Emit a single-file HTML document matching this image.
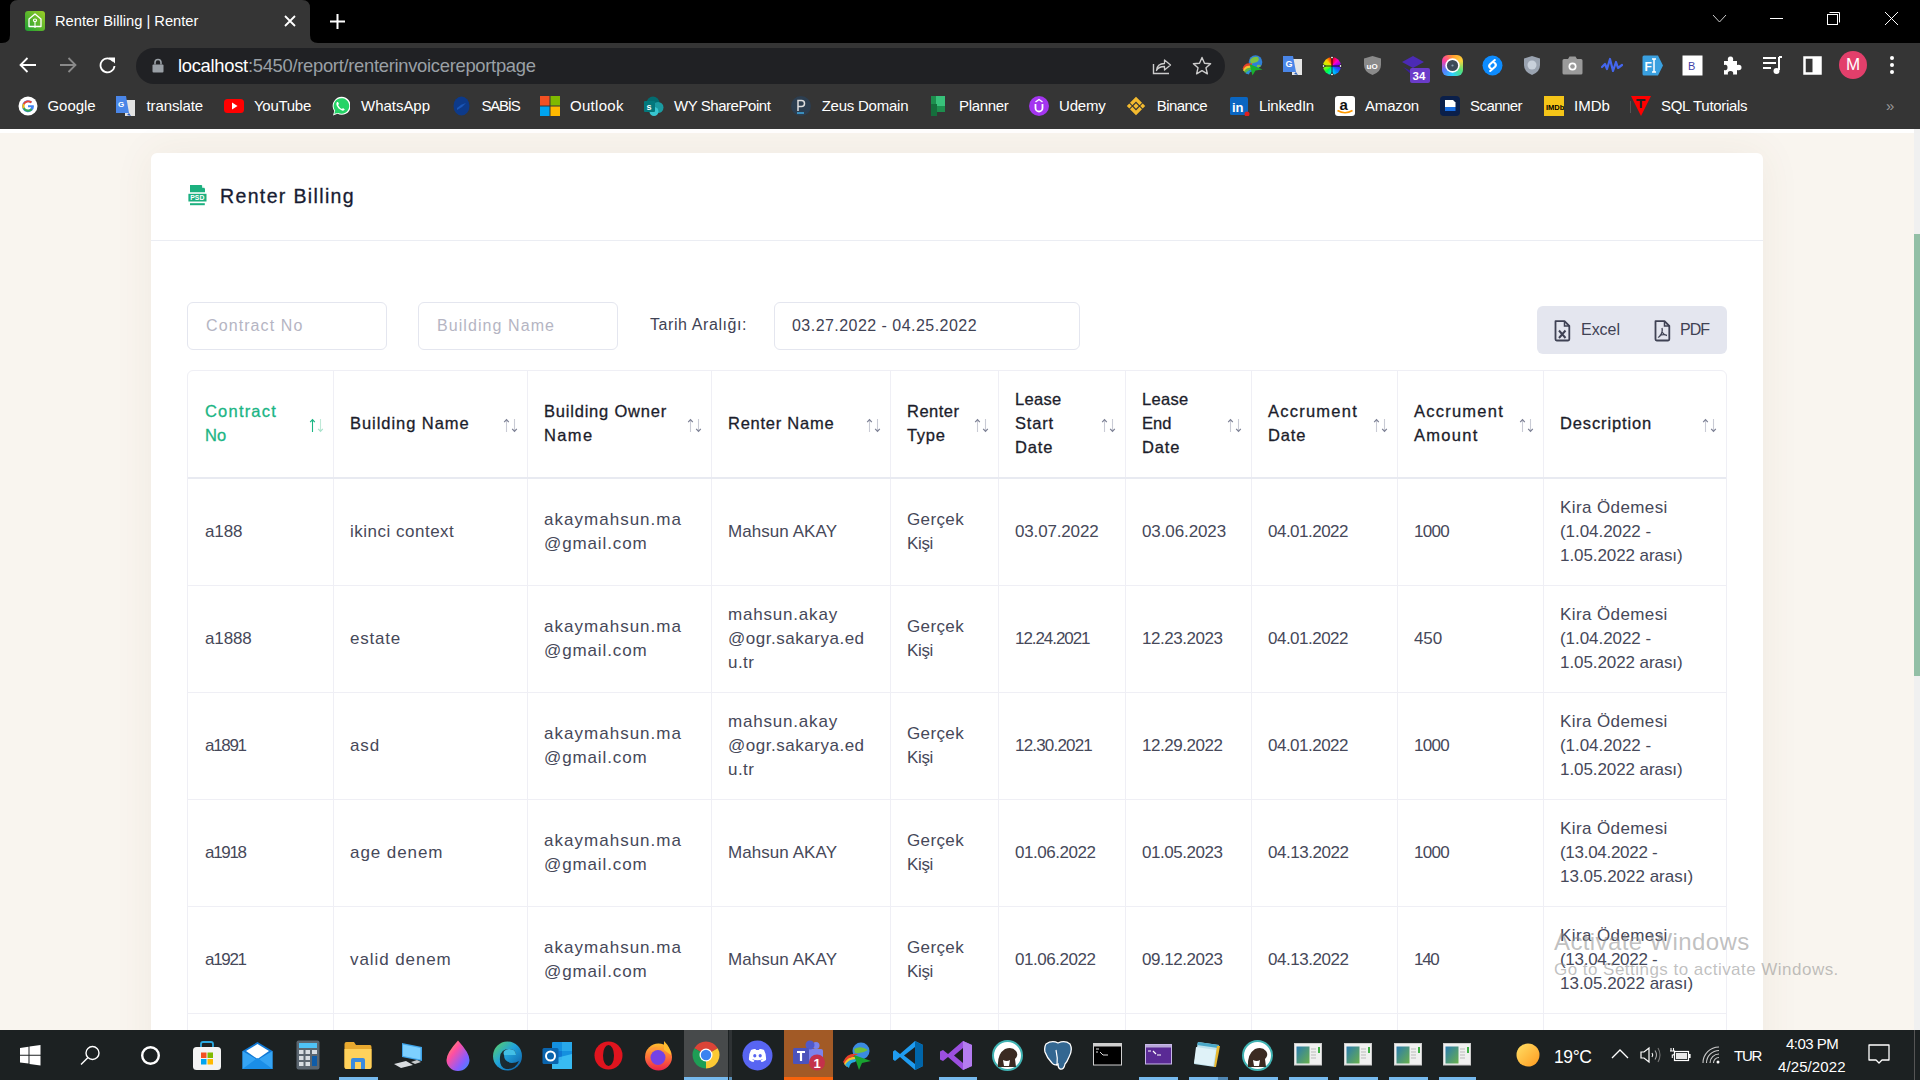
<!DOCTYPE html>
<html><head><meta charset="utf-8">
<style>
*{box-sizing:border-box;margin:0;padding:0}
html,body{width:1920px;height:1080px;overflow:hidden;background:#f9f5ef;font-family:"Liberation Sans",sans-serif}
.abs{position:absolute}
svg{display:block}
#tabs{position:absolute;left:0;top:0;width:1920px;height:43px;background:#000}
#toolbar{position:absolute;left:0;top:43px;width:1920px;height:43px;background:#353535}
#bm{position:absolute;left:0;top:86px;width:1920px;height:43px;background:#353535}
#omni{position:absolute;left:136px;top:48px;width:1089px;height:36px;border-radius:18px;background:#202124}
.ctext{color:#fff;font-size:14px;white-space:nowrap;line-height:1}
.bmt{position:absolute;top:98px;color:#fff;font-size:15px;line-height:15px;white-space:nowrap}
#page{position:absolute;left:0;top:129px;width:1914px;height:901px;background:#f9f5ef;overflow:hidden}
#topstrip{position:absolute;left:0;top:0;width:1914px;height:4px;background:#fff}
#sb{position:absolute;left:1914px;top:129px;width:6px;height:901px;background:#f0f0f0}
#sbthumb{position:absolute;left:1914px;top:234px;width:6px;height:442px;background:#93bfa6}
#card{position:absolute;left:151px;top:24px;width:1612px;height:1000px;background:#fff;border-radius:6px;box-shadow:0 0 40px rgba(110,80,40,.07)}
.inp{position:absolute;top:149px;height:48px;border:1px solid #e4e6ef;border-radius:6px;background:#fff}
.ph{position:absolute;white-space:nowrap;font-size:16px;line-height:16px}
.vl{position:absolute;top:217px;width:1px;background:#efeff5}
.hl{position:absolute;height:1px;background:#efeff5}
.th{position:absolute;color:#1c1d2b;font-size:16px;line-height:24px;font-weight:700;white-space:nowrap}
.td{position:absolute;color:#464859;font-size:17px;line-height:24px;white-space:nowrap}
#taskbar{position:absolute;left:0;top:1030px;width:1920px;height:50px;background:#1c2122}
.tb{position:absolute}
</style></head>
<body>

<!-- TAB STRIP -->
<div id="tabs">
  <svg class="abs" style="left:0;top:0" width="330" height="43"><path d="M2 43 Q10 43 10 35 L10 8 Q10 0 18 0 L302 0 Q310 0 310 8 L310 35 Q310 43 318 43 Z" fill="#353535"/></svg>
  <svg class="abs" style="left:25px;top:11px" width="20" height="20"><defs><linearGradient id="fav" x1="0" y1="1" x2="1" y2="0"><stop offset="0" stop-color="#1e9e32"/><stop offset="1" stop-color="#9ccf26"/></linearGradient></defs><rect x="0" y="0" width="20" height="20" rx="3" fill="url(#fav)"/><path d="M4 15.5 L4 8 L10 3 L16 8 L16 15.5 Z" fill="none" stroke="#fff" stroke-width="1.3" stroke-linejoin="round"/><ellipse cx="10" cy="9.3" rx="1.6" ry="1.3" fill="none" stroke="#fff" stroke-width="1.1"/><path d="M10 10.6 V17" stroke="#fff" stroke-width="1.1"/></svg>
  <div class="abs ctext" style="left:55px;top:14px;font-size:14.7px">Renter Billing | Renter</div>
  <svg class="abs" style="left:284px;top:15px" width="12" height="12"><path d="M1 1 L11 11 M11 1 L1 11" stroke="#fff" stroke-width="1.8"/></svg>
  <svg class="abs" style="left:329px;top:13px" width="17" height="17"><path d="M8.5 1 V16 M1 8.5 H16" stroke="#fff" stroke-width="2"/></svg>
  <svg class="abs" style="left:1712px;top:14px" width="16" height="10"><path d="M1 1 L7.5 8 L14 1" fill="none" stroke="#ccc" stroke-width="1"/></svg>
  <div class="abs" style="left:1770px;top:18px;width:13px;height:1px;background:#fff"></div>
  <svg class="abs" style="left:1826px;top:11px" width="16" height="16"><rect x="1.5" y="3.5" width="10" height="10" fill="none" stroke="#fff" stroke-width="1"/><path d="M3.5 1.5 H13.5 V11.5" fill="none" stroke="#fff" stroke-width="1"/></svg>
  <svg class="abs" style="left:1884px;top:11px" width="16" height="16"><path d="M1 1 L14 14 M14 1 L1 14" stroke="#fff" stroke-width="1"/></svg>
</div>
<!-- TOOLBAR -->
<div id="toolbar">
  <svg class="abs" style="left:18px;top:13px" width="20" height="18"><path d="M18 9 H3 M9.5 2 L2.5 9 L9.5 16" fill="none" stroke="#fff" stroke-width="1.8"/></svg>
  <svg class="abs" style="left:58px;top:13px" width="20" height="18"><path d="M2 9 H17 M10.5 2 L17.5 9 L10.5 16" fill="none" stroke="#8a8a8a" stroke-width="1.8"/></svg>
  <svg class="abs" style="left:98px;top:13px" width="20" height="18"><path d="M15.2 5.2 A7 7 0 1 0 16.5 10" fill="none" stroke="#fff" stroke-width="1.8"/><path d="M11 1.5 L17 1.5 L17 7.5 Z" fill="#fff"/></svg>
</div>
<div id="omni">
  <svg class="abs" style="left:16px;top:10px" width="12" height="15"><path d="M3 6.5 V4.5 A3 3 0 0 1 9 4.5 V6.5" fill="none" stroke="#9aa0a6" stroke-width="1.6"/><rect x="0.5" y="6.5" width="11" height="8" rx="1" fill="#9aa0a6"/></svg>
  <div class="abs ctext" style="left:42px;top:9px;font-size:18.4px;letter-spacing:-0.3px;color:#fff">localhost<span style="color:#9aa0a6">:5450/report/renterinvoicereportpage</span></div>
  <svg class="abs" style="left:1016px;top:9px" width="20" height="18"><path d="M1.5 7 V16.5 H17" fill="none" stroke="#ccc" stroke-width="1.4"/><path d="M4.5 13.5 C5 8 9 6.5 12.5 6.5 V3 L18.5 8 L12.5 13 V9.5 C9 9.5 6 10.5 4.5 13.5 Z" fill="none" stroke="#ccc" stroke-width="1.3" stroke-linejoin="round"/></svg>
  <svg class="abs" style="left:1056px;top:8px" width="20" height="20"><path d="M10 1.5 L12.5 7.3 L18.6 7.8 L14 11.8 L15.4 17.8 L10 14.6 L4.6 17.8 L6 11.8 L1.4 7.8 L7.5 7.3 Z" fill="none" stroke="#ccc" stroke-width="1.4" stroke-linejoin="round"/></svg>
</div>

<!-- EXTENSIONS -->
<div id="exts">
  <!-- IDM -->
  <svg class="abs" style="left:1241px;top:54px" width="23" height="22"><circle cx="14.5" cy="8" r="6.8" fill="#2f7fd8"/><path d="M9 6 Q12 2 17 3 Q19 6 16 8 Q12 9 10 10Z" fill="#7cc242"/><path d="M16 11 Q19 10 20 12 Q18 14 16 13Z" fill="#7cc242"/><path d="M1.5 15 Q3 8 11 9.5 L11 12 Q5 11.5 4.2 16.5Z" fill="#e8402a"/><path d="M2 16.5 Q3.5 10.5 11 12 L11 14 Q6 13.5 5 18Z" fill="#f2c230"/><path d="M3 18 Q5 13 11 14 L11 16 Q7 15.5 6.5 19.5Z" fill="#5cb846"/><path d="M4.5 19.5 Q7 15.5 11 16 L11 17.5 Q8.5 17.5 8 20.5Z" fill="#2a8fd8"/><path d="M8.5 10 L21.5 15.5 L14.5 16.5 L11.5 21.5 Z" fill="#19b02e"/></svg>
  <!-- G translate -->
  <svg class="abs" style="left:1282px;top:55px" width="21" height="21"><rect x="10" y="4" width="10" height="16" fill="#e6e6e6"/><path d="M1 1 H11 L14 17 H1 Z" fill="#4a86e8"/><text x="3.5" y="12" font-family="Liberation Sans" font-size="9" font-weight="700" fill="#fff">G</text><path d="M12 19 L14 17 L16 20Z" fill="#3366bb"/></svg>
  <!-- color wheel -->
  <div class="abs" style="left:1323px;top:57px;width:18px;height:18px;border-radius:9px;background:conic-gradient(#ff0000,#ff00c8,#6a00ff,#0080ff,#00e0ff,#00ff40,#b0ff00,#ffd000,#ff0000)"></div>
  <svg class="abs" style="left:1321px;top:55px" width="22" height="22"><path d="M11 2 V20 M2 11 H20" stroke="#111" stroke-width="0.9"/><path d="M11 0.5 L12.3 2.5 L11 4.5 L9.7 2.5Z M11 17.5 L12.3 19.5 L11 21.5 L9.7 19.5Z M0.5 11 L2.5 9.7 L4.5 11 L2.5 12.3Z M17.5 11 L19.5 9.7 L21.5 11 L19.5 12.3Z" fill="#fff" stroke="#111" stroke-width="0.8"/></svg>
  <!-- uBlock -->
  <svg class="abs" style="left:1363px;top:55px" width="19" height="21"><path d="M9.5 1 L18 3.5 V10 Q18 17 9.5 20 Q1 17 1 10 V3.5 Z" fill="#8a8a8a"/><text x="3.5" y="13.5" font-family="Liberation Sans" font-size="8" font-weight="700" fill="#fff">uO</text></svg>
  <!-- stack badge 34 -->
  <svg class="abs" style="left:1402px;top:54px" width="30" height="30"><path d="M10 2 L21 8 L10 14 L-1 8 Z" fill="#4b2ab5" transform="translate(1,0)"/><path d="M1 13 L11 18 L11 22 Z" fill="#3a1f9a"/><rect x="8" y="14" width="20" height="15" rx="2" fill="#6b3cc9"/><text x="10.5" y="26" font-family="Liberation Sans" font-size="11.5" font-weight="700" fill="#fff">34</text></svg>
  <!-- lens -->
  <div class="abs" style="left:1442px;top:55px;width:21px;height:21px;border-radius:6px;background:conic-gradient(#ff9a2e,#ffd23a,#54e07a,#2ad3ff,#5a7bff,#ff3fa4,#ff9a2e)"></div>
  <svg class="abs" style="left:1442px;top:55px" width="21" height="21"><circle cx="10.5" cy="10.5" r="7.2" fill="#fff"/><circle cx="10.5" cy="10.5" r="5.6" fill="#3d4b58"/><circle cx="10.5" cy="10.5" r="1.1" fill="#8aa0b0"/></svg>
  <!-- shazam -->
  <svg class="abs" style="left:1482px;top:55px" width="21" height="21"><circle cx="10.5" cy="10.5" r="10" fill="#0d8cff"/><path d="M12.8 5 L8 9.3 Q6.3 11 8 12.7 L9.6 14 M8.2 16 L13 11.7 Q14.7 10 13 8.3 L11.4 7" fill="none" stroke="#fff" stroke-width="2.1" stroke-linecap="round"/></svg>
  <!-- shield -->
  <svg class="abs" style="left:1523px;top:55px" width="18" height="21"><path d="M9 1 L17 3.5 V10 Q17 17 9 20 Q1 17 1 10 V3.5 Z" fill="#9aa3b0"/><circle cx="9" cy="10" r="4.5" fill="#c8d0da"/></svg>
  <!-- camera -->
  <svg class="abs" style="left:1562px;top:56px" width="21" height="19"><path d="M6 3 L7.5 0.5 H13.5 L15 3 H19 Q20.5 3 20.5 4.5 V17 Q20.5 18.5 19 18.5 H2 Q0.5 18.5 0.5 17 V4.5 Q0.5 3 2 3 Z" fill="#9a9a9a"/><circle cx="10.5" cy="10.5" r="4" fill="#fff"/><circle cx="10.5" cy="10.5" r="2.3" fill="#9a9a9a"/></svg>
  <!-- wave -->
  <svg class="abs" style="left:1601px;top:55px" width="22" height="20"><path d="M1 12 L4 9 L6 14 L9 4 L12 16 L15 7 L17 13 L21 10" fill="none" stroke="#4466ee" stroke-width="2.2" stroke-linejoin="round" stroke-linecap="round"/></svg>
  <!-- FI -->
  <svg class="abs" style="left:1642px;top:55px" width="22" height="21"><path d="M2 0.5 H16 L21 10.5 L16 20.5 H2 Q0.5 20.5 0.5 19 V2 Q0.5 0.5 2 0.5Z" fill="#3aa0e0"/><text x="2.5" y="15.5" font-family="Liberation Sans" font-size="12" font-weight="700" fill="#fff">F</text><path d="M12 4 V17 M10 4 H14 M10 17 H14" stroke="#fff" stroke-width="1.5"/></svg>
  <!-- B -->
  <svg class="abs" style="left:1682px;top:55px" width="21" height="21"><rect x="0.5" y="0.5" width="20" height="20" fill="#fff"/><text x="6" y="15" font-family="Liberation Sans" font-size="11" font-weight="400" fill="#3f3fa8">B</text></svg>
  <!-- puzzle -->
  <svg class="abs" style="left:1722px;top:55px" width="21" height="21"><path d="M2 6 H6 Q5 1.5 8.5 1.5 Q12 1.5 11 6 H15 V10 Q19.5 9 19.5 12.5 Q19.5 16 15 15 V19.5 H11 Q12 16 8.5 16 Q5 16 6 19.5 H2 V15 Q5.5 16 5.5 12.5 Q5.5 9 2 10 Z" fill="#fff"/></svg>
  <!-- music list -->
  <svg class="abs" style="left:1762px;top:56px" width="21" height="19"><path d="M1 2 H14 M1 7 H14 M1 12 H9" stroke="#fff" stroke-width="2"/><path d="M17 1 V14" stroke="#fff" stroke-width="2"/><path d="M17 1 H20" stroke="#fff" stroke-width="2"/><circle cx="14.5" cy="15" r="3" fill="#fff"/></svg>
  <!-- side panel -->
  <svg class="abs" style="left:1803px;top:56px" width="19" height="19"><rect x="1.5" y="1.5" width="16" height="16" fill="none" stroke="#fff" stroke-width="2.5"/><rect x="9.5" y="1.5" width="8" height="16" fill="#fff"/></svg>
  <!-- avatar -->
  <div class="abs" style="left:1839px;top:51px;width:28px;height:28px;border-radius:14px;background:#e23f6b;color:#fff;font-size:17px;line-height:28px;text-align:center">M</div>
  <!-- menu -->
  <svg class="abs" style="left:1888px;top:55px" width="8" height="20"><circle cx="4" cy="3" r="2" fill="#fff"/><circle cx="4" cy="10" r="2" fill="#fff"/><circle cx="4" cy="17" r="2" fill="#fff"/></svg>
</div>

<div id="bm"></div>
<svg class="abs" style="left:17.5px;top:96px" width="20" height="20"><circle cx="10" cy="10" r="9.5" fill="#fff"/><path d="M15.5 9.2 H10 V11.3 H13.2 Q12.6 13.8 10 13.8 A3.8 3.8 0 1 1 12.6 7.3 L14.1 5.8 A6 6 0 1 0 16 10 Q16 9.6 15.5 9.2Z" fill="#4285f4"/><path d="M5 7.5 A6 6 0 0 1 14.1 5.8 L12.6 7.3 A3.8 3.8 0 0 0 6.6 8.7Z" fill="#ea4335"/><path d="M4.3 10 A6 6 0 0 0 5 12.8 L6.7 11.4 A3.8 3.8 0 0 1 6.6 8.7 L5 7.5 A6 6 0 0 0 4.3 10Z" fill="#fbbc05"/><path d="M5 12.8 A6 6 0 0 0 14.5 14 L12.8 12.6 A3.8 3.8 0 0 1 6.7 11.4Z" fill="#34a853"/></svg>
<div class="bmt" style="left:47.5px;letter-spacing:-0.062px">Google</div>
<svg class="abs" style="left:116px;top:96px" width="20" height="20"><rect x="9" y="4" width="10" height="16" fill="#e3e3e3"/><path d="M0 0 H10 L13 17 H0Z" fill="#4a86e8"/><text x="2" y="11" font-family="Liberation Sans" font-size="8" font-weight="700" fill="#fff">G</text><path d="M11 19 L13 17 L15 20Z" fill="#2e5cb8"/></svg>
<div class="bmt" style="left:146.5px;letter-spacing:-0.115px">translate</div>
<svg class="abs" style="left:224px;top:96px" width="20" height="20"><rect x="0" y="3" width="20" height="14" rx="3.5" fill="#ff0000"/><path d="M8 6.5 L13.5 10 L8 13.5Z" fill="#fff"/></svg>
<div class="bmt" style="left:254px;letter-spacing:-0.278px">YouTube</div>
<svg class="abs" style="left:330px;top:96px" width="20" height="20"><path d="M3 19.5 L4.3 15 A9 9 0 1 1 7.5 17.8 Z" fill="#fff"/><path d="M4.2 17.8 L5.2 14.7 A7.8 7.8 0 1 1 8 17 Z" fill="#25d366"/><path d="M7 6 Q6 7 6.5 9 Q8 13 12 14.5 Q14 15 14.8 13.5 L13 12 L12 13 Q9.5 12 8 9 L9 8 L8 6Z" fill="#fff"/></svg>
<div class="bmt" style="left:361px;letter-spacing:-0.025px">WhatsApp</div>
<svg class="abs" style="left:452.5px;top:96px" width="20" height="20"><ellipse cx="8.5" cy="10" rx="8" ry="9.5" fill="#0d3a8a"/><path d="M4 12 Q8 8 13 7 Q9 12 4 14Z" fill="#1a56b8"/></svg>
<div class="bmt" style="left:481.5px;letter-spacing:-1.237px">SABİS</div>
<svg class="abs" style="left:540px;top:96px" width="20" height="20"><rect x="0" y="0" width="9.5" height="9.5" fill="#f25022"/><rect x="10.5" y="0" width="9.5" height="9.5" fill="#7fba00"/><rect x="0" y="10.5" width="9.5" height="9.5" fill="#00a4ef"/><rect x="10.5" y="10.5" width="9.5" height="9.5" fill="#ffb900"/></svg>
<div class="bmt" style="left:570px;letter-spacing:0.294px">Outlook</div>
<svg class="abs" style="left:643.75px;top:96px" width="20" height="20"><circle cx="9" cy="7" r="6.5" fill="#036c70"/><circle cx="14" cy="11.5" r="5.5" fill="#1a9ba1"/><circle cx="10" cy="15.5" r="4.5" fill="#37c6d0"/><rect x="0" y="5" width="11" height="11" rx="1" fill="#03787c"/><text x="2.5" y="14" font-family="Liberation Sans" font-size="9" font-weight="700" fill="#fff">s</text></svg>
<div class="bmt" style="left:674px;letter-spacing:-0.450px">WY SharePoint</div>
<svg class="abs" style="left:791px;top:96px" width="20" height="20"><circle cx="10" cy="10" r="10" fill="#2c3e50"/><path d="M7 15 V4.5 H10.5 A3 3 0 0 1 10.5 10.5 H7" fill="none" stroke="#ddd" stroke-width="1.5"/><path d="M6 17 H13" stroke="#3fa9e0" stroke-width="1.5"/></svg>
<div class="bmt" style="left:821.7px;letter-spacing:-0.237px">Zeus Domain</div>
<svg class="abs" style="left:931px;top:96px" width="20" height="20"><rect x="0" y="0" width="14" height="16" fill="#1d8f4e"/><rect x="5" y="0" width="9" height="10" fill="#38c17a"/><rect x="0" y="8" width="6" height="12" fill="#156e3c"/></svg>
<div class="bmt" style="left:959px;letter-spacing:-0.343px">Planner</div>
<svg class="abs" style="left:1029px;top:96px" width="20" height="20"><circle cx="10" cy="10" r="10" fill="#a435f0"/><path d="M6.5 8 V12 A3.5 3.5 0 0 0 13.5 12 V8" fill="none" stroke="#fff" stroke-width="1.8"/><path d="M6.5 6 L10 3.5 L13.5 6" fill="none" stroke="#fff" stroke-width="1.4"/></svg>
<div class="bmt" style="left:1059px;letter-spacing:-0.162px">Udemy</div>
<svg class="abs" style="left:1126px;top:96px" width="20" height="20"><path d="M10 7.3 L12.7 10 L10 12.7 L7.3 10Z M0.8 10 L3.3 7.5 L5.8 10 L3.3 12.5Z M14.2 10 L16.7 7.5 L19.2 10 L16.7 12.5Z M10 0.8 L16 6.8 L13.6 9.2 L10 5.6 L6.4 9.2 L4 6.8Z M10 19.2 L16 13.2 L13.6 10.8 L10 14.4 L6.4 10.8 L4 13.2Z" fill="#f3ba2f"/></svg>
<div class="bmt" style="left:1156.7px;letter-spacing:-0.558px">Binance</div>
<svg class="abs" style="left:1230px;top:96px" width="20" height="20"><rect x="0" y="1" width="18" height="18" rx="1.5" fill="#0a66c2"/><text x="2" y="16" font-family="Liberation Sans" font-size="13" font-weight="700" fill="#fff">in</text><circle cx="17" cy="18" r="2.5" fill="#e0201d"/></svg>
<div class="bmt" style="left:1259px;letter-spacing:-0.214px">LinkedIn</div>
<svg class="abs" style="left:1335px;top:96px" width="20" height="20"><rect x="0" y="0" width="20" height="20" rx="3" fill="#fff"/><text x="4.5" y="14" font-family="Liberation Sans" font-size="15" font-weight="700" fill="#111">a</text><path d="M2.5 14.5 Q10 19 17.5 14.5" fill="none" stroke="#ff9900" stroke-width="1.5"/></svg>
<div class="bmt" style="left:1365px;letter-spacing:-0.171px">Amazon</div>
<svg class="abs" style="left:1440px;top:96px" width="20" height="20"><rect x="0" y="0" width="20" height="20" rx="4" fill="#0a1f4a"/><path d="M5 4 H13 L15.5 6.5 V11 H5Z" fill="#fff"/><rect x="5" y="11" width="10.5" height="4" fill="#1a6ee0"/></svg>
<div class="bmt" style="left:1470px;letter-spacing:-0.553px">Scanner</div>
<svg class="abs" style="left:1544px;top:96px" width="20" height="20"><rect x="0" y="0" width="20" height="20" fill="#f5c518"/><text x="2" y="13.5" font-family="Liberation Sans" font-size="7.5" font-weight="700" fill="#000">IMDb</text></svg>
<div class="bmt" style="left:1574px;letter-spacing:0.041px">IMDb</div>
<svg class="abs" style="left:1631px;top:96px" width="20" height="20"><path d="M0 0 H20 L10 20Z" fill="#ff0000"/><path d="M5.5 4 H14.5 M10 4 V12" stroke="#222" stroke-width="2.2"/></svg>
<div class="bmt" style="left:1661px;letter-spacing:-0.319px">SQL Tutorials</div>
<div class="abs" style="left:1886px;top:97px;color:#9a9a9a;font-size:15px">&#187;</div>
<div class="abs" style="left:1630px;top:101px;width:1px;height:12px;background:#555"></div>
<div id="page"><div id="topstrip"></div>
<div id="card"></div>
<svg class="abs" style="left:188px;top:55px" width="19" height="22"><path d="M2 1 H13.5 L17 4.5 V8.3 H2Z" fill="#1cb07f"/><path d="M14.2 1.3 L16.7 3.8 H14.2Z" fill="#fff"/><rect x="0.4" y="9.8" width="18.1" height="7.7" fill="#1cb07f"/><text x="2.3" y="16.2" font-family="Liberation Sans" font-size="7.4" font-weight="700" fill="#fff" textLength="14" lengthAdjust="spacingAndGlyphs">PSD</text><rect x="2" y="19.2" width="14.8" height="2" fill="#1cb07f"/></svg>
<div class="abs" style="left:220px;top:55px;font-size:19.5px;line-height:24px;color:#181c32;white-space:nowrap;-webkit-text-stroke:0.3px #181c32"><span style="letter-spacing:1.359px">Renter Billing</span></div>
<div class="abs" style="left:151px;top:111px;width:1612px;height:1px;background:#ebedf3"></div>
<div class="inp" style="left:187px;width:200px;top:173px"></div>
<div class="ph" style="left:206px;top:189px;color:#b5b5c3"><span style="letter-spacing:1.094px">Contract No</span></div>
<div class="inp" style="left:418px;width:200px;top:173px"></div>
<div class="ph" style="left:437px;top:189px;color:#b5b5c3"><span style="letter-spacing:1.073px">Building Name</span></div>
<div class="ph" style="left:650px;top:188px;color:#3f4254"><span style="letter-spacing:0.585px">Tarih Aralığı:</span></div>
<div class="inp" style="left:774px;width:306px;top:173px"></div>
<div class="ph" style="left:792px;top:189px;color:#3f4254"><span style="letter-spacing:0.462px">03.27.2022 - 04.25.2022</span></div>
<div class="abs" style="left:1537px;top:177px;width:190px;height:48px;border-radius:6px;background:#e4e6ef"></div>
<svg class="abs" style="left:1554px;top:191px" width="17" height="22"><path d="M1.5 1.2 H10.5 L15.3 6 V19.3 Q15.3 20.5 14.1 20.5 H2.7 Q1.5 20.5 1.5 19.3 Z" fill="none" stroke="#3f4254" stroke-width="1.8" stroke-linejoin="round"/><path d="M10.5 1.2 V6 H15.3" fill="none" stroke="#3f4254" stroke-width="1.5"/><path d="M5 10.5 L11.5 18 M11.5 10.5 L5 18" stroke="#3f4254" stroke-width="2"/></svg>
<div class="ph" style="left:1581px;top:193px;color:#3f4254"><span style="letter-spacing:-0.025px">Excel</span></div>
<svg class="abs" style="left:1654px;top:191px" width="17" height="22"><path d="M1.5 1.2 H10.5 L15.3 6 V19.3 Q15.3 20.5 14.1 20.5 H2.7 Q1.5 20.5 1.5 19.3 Z" fill="none" stroke="#3f4254" stroke-width="1.8" stroke-linejoin="round"/><path d="M10.5 1.2 V6 H15.3" fill="none" stroke="#3f4254" stroke-width="1.5"/><path d="M8 8 Q9 12 6 16 Q5 17.5 4 17 M8 12 Q10 15 13 15.5 M5.5 15.5 Q9 14 12 15" fill="none" stroke="#3f4254" stroke-width="1.3"/></svg>
<div class="ph" style="left:1680px;top:193px;color:#3f4254"><span style="letter-spacing:-1.000px">PDF</span></div>
<div class="abs" style="left:187px;top:241px;width:1540px;height:800px;border:1px solid #efeff5;border-radius:6px"></div>
<div class="vl" style="left:333px;top:242px;height:700px"></div>
<div class="vl" style="left:527px;top:242px;height:700px"></div>
<div class="vl" style="left:711px;top:242px;height:700px"></div>
<div class="vl" style="left:890px;top:242px;height:700px"></div>
<div class="vl" style="left:998px;top:242px;height:700px"></div>
<div class="vl" style="left:1125px;top:242px;height:700px"></div>
<div class="vl" style="left:1251px;top:242px;height:700px"></div>
<div class="vl" style="left:1397px;top:242px;height:700px"></div>
<div class="vl" style="left:1543px;top:242px;height:700px"></div>
<div class="abs" style="left:188px;top:348px;width:1538px;height:2px;background:#e8eaf1"></div>
<div class="hl" style="left:188px;top:456px;width:1538px"></div>
<div class="hl" style="left:188px;top:563px;width:1538px"></div>
<div class="hl" style="left:188px;top:670px;width:1538px"></div>
<div class="hl" style="left:188px;top:777px;width:1538px"></div>
<div class="hl" style="left:188px;top:884px;width:1538px"></div>
<div class="th" style="left:205px;top:270px;color:#1bb584;font-size:16.5px;font-weight:400;-webkit-text-stroke:0.3px #1bb584"><span style="letter-spacing:1.205px">Contract</span><br><span style="letter-spacing:0.204px">No</span></div>
<svg class="abs" style="left:309px;top:289px" width="16" height="15"><path d="M3.5 14 V2" stroke="#1bb584" stroke-width="1.1"/><path d="M1.2 4.2 L3.5 1.6 L5.8 4.2" fill="none" stroke="#1bb584" stroke-width="1.2"/><path d="M11.5 1 V13" stroke="#bfe9d8" stroke-width="1.1"/><path d="M9.2 10.8 L11.5 13.4 L13.8 10.8" fill="none" stroke="#a8e2cb" stroke-width="1.2"/></svg>
<div class="th" style="left:350px;top:282px;color:#1c1d2b;font-size:16.5px;font-weight:400;-webkit-text-stroke:0.3px #1c1d2b"><span style="letter-spacing:0.946px">Building Name</span></div>
<svg class="abs" style="left:503px;top:289px" width="16" height="15"><path d="M3.5 14 V2" stroke="#c9cbd5" stroke-width="1.1"/><path d="M1.2 4.2 L3.5 1.6 L5.8 4.2" fill="none" stroke="#7b7f93" stroke-width="1.2"/><path d="M11.5 1 V13" stroke="#c9cbd5" stroke-width="1.1"/><path d="M9.2 10.8 L11.5 13.4 L13.8 10.8" fill="none" stroke="#7b7f93" stroke-width="1.2"/></svg>
<div class="th" style="left:544px;top:270px;color:#1c1d2b;font-size:16.5px;font-weight:400;-webkit-text-stroke:0.3px #1c1d2b"><span style="letter-spacing:0.794px">Building Owner</span><br><span style="letter-spacing:1.372px">Name</span></div>
<svg class="abs" style="left:687px;top:289px" width="16" height="15"><path d="M3.5 14 V2" stroke="#c9cbd5" stroke-width="1.1"/><path d="M1.2 4.2 L3.5 1.6 L5.8 4.2" fill="none" stroke="#7b7f93" stroke-width="1.2"/><path d="M11.5 1 V13" stroke="#c9cbd5" stroke-width="1.1"/><path d="M9.2 10.8 L11.5 13.4 L13.8 10.8" fill="none" stroke="#7b7f93" stroke-width="1.2"/></svg>
<div class="th" style="left:728px;top:282px;color:#1c1d2b;font-size:16.5px;font-weight:400;-webkit-text-stroke:0.3px #1c1d2b"><span style="letter-spacing:0.743px">Renter Name</span></div>
<svg class="abs" style="left:866px;top:289px" width="16" height="15"><path d="M3.5 14 V2" stroke="#c9cbd5" stroke-width="1.1"/><path d="M1.2 4.2 L3.5 1.6 L5.8 4.2" fill="none" stroke="#7b7f93" stroke-width="1.2"/><path d="M11.5 1 V13" stroke="#c9cbd5" stroke-width="1.1"/><path d="M9.2 10.8 L11.5 13.4 L13.8 10.8" fill="none" stroke="#7b7f93" stroke-width="1.2"/></svg>
<div class="th" style="left:907px;top:270px;color:#1c1d2b;font-size:16.5px;font-weight:400;-webkit-text-stroke:0.3px #1c1d2b"><span style="letter-spacing:0.496px">Renter</span><br><span style="letter-spacing:0.682px">Type</span></div>
<svg class="abs" style="left:974px;top:289px" width="16" height="15"><path d="M3.5 14 V2" stroke="#c9cbd5" stroke-width="1.1"/><path d="M1.2 4.2 L3.5 1.6 L5.8 4.2" fill="none" stroke="#7b7f93" stroke-width="1.2"/><path d="M11.5 1 V13" stroke="#c9cbd5" stroke-width="1.1"/><path d="M9.2 10.8 L11.5 13.4 L13.8 10.8" fill="none" stroke="#7b7f93" stroke-width="1.2"/></svg>
<div class="th" style="left:1015px;top:258px;color:#1c1d2b;font-size:16.5px;font-weight:400;-webkit-text-stroke:0.3px #1c1d2b"><span style="letter-spacing:0.289px">Lease</span><br><span style="letter-spacing:0.791px">Start</span><br><span style="letter-spacing:0.837px">Date</span></div>
<svg class="abs" style="left:1101px;top:289px" width="16" height="15"><path d="M3.5 14 V2" stroke="#c9cbd5" stroke-width="1.1"/><path d="M1.2 4.2 L3.5 1.6 L5.8 4.2" fill="none" stroke="#7b7f93" stroke-width="1.2"/><path d="M11.5 1 V13" stroke="#c9cbd5" stroke-width="1.1"/><path d="M9.2 10.8 L11.5 13.4 L13.8 10.8" fill="none" stroke="#7b7f93" stroke-width="1.2"/></svg>
<div class="th" style="left:1142px;top:258px;color:#1c1d2b;font-size:16.5px;font-weight:400;-webkit-text-stroke:0.3px #1c1d2b"><span style="letter-spacing:0.289px">Lease</span><br><span style="letter-spacing:0.081px">End</span><br><span style="letter-spacing:0.837px">Date</span></div>
<svg class="abs" style="left:1227px;top:289px" width="16" height="15"><path d="M3.5 14 V2" stroke="#c9cbd5" stroke-width="1.1"/><path d="M1.2 4.2 L3.5 1.6 L5.8 4.2" fill="none" stroke="#7b7f93" stroke-width="1.2"/><path d="M11.5 1 V13" stroke="#c9cbd5" stroke-width="1.1"/><path d="M9.2 10.8 L11.5 13.4 L13.8 10.8" fill="none" stroke="#7b7f93" stroke-width="1.2"/></svg>
<div class="th" style="left:1268px;top:270px;color:#1c1d2b;font-size:16.5px;font-weight:400;-webkit-text-stroke:0.3px #1c1d2b"><span style="letter-spacing:1.238px">Accrument</span><br><span style="letter-spacing:0.837px">Date</span></div>
<svg class="abs" style="left:1373px;top:289px" width="16" height="15"><path d="M3.5 14 V2" stroke="#c9cbd5" stroke-width="1.1"/><path d="M1.2 4.2 L3.5 1.6 L5.8 4.2" fill="none" stroke="#7b7f93" stroke-width="1.2"/><path d="M11.5 1 V13" stroke="#c9cbd5" stroke-width="1.1"/><path d="M9.2 10.8 L11.5 13.4 L13.8 10.8" fill="none" stroke="#7b7f93" stroke-width="1.2"/></svg>
<div class="th" style="left:1414px;top:270px;color:#1c1d2b;font-size:16.5px;font-weight:400;-webkit-text-stroke:0.3px #1c1d2b"><span style="letter-spacing:1.238px">Accrument</span><br><span style="letter-spacing:1.273px">Amount</span></div>
<svg class="abs" style="left:1519px;top:289px" width="16" height="15"><path d="M3.5 14 V2" stroke="#c9cbd5" stroke-width="1.1"/><path d="M1.2 4.2 L3.5 1.6 L5.8 4.2" fill="none" stroke="#7b7f93" stroke-width="1.2"/><path d="M11.5 1 V13" stroke="#c9cbd5" stroke-width="1.1"/><path d="M9.2 10.8 L11.5 13.4 L13.8 10.8" fill="none" stroke="#7b7f93" stroke-width="1.2"/></svg>
<div class="th" style="left:1560px;top:282px;color:#1c1d2b;font-size:16.5px;font-weight:400;-webkit-text-stroke:0.3px #1c1d2b"><span style="letter-spacing:0.861px">Description</span></div>
<svg class="abs" style="left:1702px;top:289px" width="16" height="15"><path d="M3.5 14 V2" stroke="#c9cbd5" stroke-width="1.1"/><path d="M1.2 4.2 L3.5 1.6 L5.8 4.2" fill="none" stroke="#7b7f93" stroke-width="1.2"/><path d="M11.5 1 V13" stroke="#c9cbd5" stroke-width="1.1"/><path d="M9.2 10.8 L11.5 13.4 L13.8 10.8" fill="none" stroke="#7b7f93" stroke-width="1.2"/></svg>
<div class="td" style="left:205px;top:391px"><span style="letter-spacing:-0.080px">a188</span></div>
<div class="td" style="left:350px;top:391px"><span style="letter-spacing:0.499px">ikinci context</span></div>
<div class="td" style="left:544px;top:379px"><span style="letter-spacing:1.021px">akaymahsun.ma</span><br><span style="letter-spacing:0.878px">@gmail.com</span></div>
<div class="td" style="left:728px;top:391px"><span style="letter-spacing:0.064px">Mahsun AKAY</span></div>
<div class="td" style="left:907px;top:379px"><span style="letter-spacing:0.368px">Gerçek</span><br><span style="letter-spacing:-0.348px">Kişi</span></div>
<div class="td" style="left:1015px;top:391px"><span style="letter-spacing:-0.158px">03.07.2022</span></div>
<div class="td" style="left:1142px;top:391px"><span style="letter-spacing:-0.105px">03.06.2023</span></div>
<div class="td" style="left:1268px;top:391px"><span style="letter-spacing:-0.508px">04.01.2022</span></div>
<div class="td" style="left:1414px;top:391px"><span style="letter-spacing:-0.705px">1000</span></div>
<div class="td" style="left:1560px;top:367px"><span style="letter-spacing:0.402px">Kira Ödemesi</span><br><span style="letter-spacing:-0.056px">(1.04.2022 -</span><br><span style="letter-spacing:-0.075px">1.05.2022 arası)</span></div>
<div class="td" style="left:205px;top:498px"><span style="letter-spacing:-0.115px">a1888</span></div>
<div class="td" style="left:350px;top:498px"><span style="letter-spacing:0.782px">estate</span></div>
<div class="td" style="left:544px;top:486px"><span style="letter-spacing:1.021px">akaymahsun.ma</span><br><span style="letter-spacing:0.878px">@gmail.com</span></div>
<div class="td" style="left:728px;top:474px"><span style="letter-spacing:0.808px">mahsun.akay</span><br><span style="letter-spacing:0.522px">@ogr.sakarya.ed</span><br><span style="letter-spacing:0.439px">u.tr</span></div>
<div class="td" style="left:907px;top:486px"><span style="letter-spacing:0.368px">Gerçek</span><br><span style="letter-spacing:-0.348px">Kişi</span></div>
<div class="td" style="left:1015px;top:498px"><span style="letter-spacing:-1.058px">12.24.2021</span></div>
<div class="td" style="left:1142px;top:498px"><span style="letter-spacing:-0.456px">12.23.2023</span></div>
<div class="td" style="left:1268px;top:498px"><span style="letter-spacing:-0.508px">04.01.2022</span></div>
<div class="td" style="left:1414px;top:498px"><span style="letter-spacing:-0.115px">450</span></div>
<div class="td" style="left:1560px;top:474px"><span style="letter-spacing:0.402px">Kira Ödemesi</span><br><span style="letter-spacing:-0.056px">(1.04.2022 -</span><br><span style="letter-spacing:-0.075px">1.05.2022 arası)</span></div>
<div class="td" style="left:205px;top:605px"><span style="letter-spacing:-1.320px">a1891</span></div>
<div class="td" style="left:350px;top:605px"><span style="letter-spacing:0.840px">asd</span></div>
<div class="td" style="left:544px;top:593px"><span style="letter-spacing:1.021px">akaymahsun.ma</span><br><span style="letter-spacing:0.878px">@gmail.com</span></div>
<div class="td" style="left:728px;top:581px"><span style="letter-spacing:0.808px">mahsun.akay</span><br><span style="letter-spacing:0.522px">@ogr.sakarya.ed</span><br><span style="letter-spacing:0.439px">u.tr</span></div>
<div class="td" style="left:907px;top:593px"><span style="letter-spacing:0.368px">Gerçek</span><br><span style="letter-spacing:-0.348px">Kişi</span></div>
<div class="td" style="left:1015px;top:605px"><span style="letter-spacing:-0.806px">12.30.2021</span></div>
<div class="td" style="left:1142px;top:605px"><span style="letter-spacing:-0.456px">12.29.2022</span></div>
<div class="td" style="left:1268px;top:605px"><span style="letter-spacing:-0.508px">04.01.2022</span></div>
<div class="td" style="left:1414px;top:605px"><span style="letter-spacing:-0.705px">1000</span></div>
<div class="td" style="left:1560px;top:581px"><span style="letter-spacing:0.402px">Kira Ödemesi</span><br><span style="letter-spacing:-0.056px">(1.04.2022 -</span><br><span style="letter-spacing:-0.075px">1.05.2022 arası)</span></div>
<div class="td" style="left:205px;top:712px"><span style="letter-spacing:-1.320px">a1918</span></div>
<div class="td" style="left:350px;top:712px"><span style="letter-spacing:0.925px">age denem</span></div>
<div class="td" style="left:544px;top:700px"><span style="letter-spacing:1.021px">akaymahsun.ma</span><br><span style="letter-spacing:0.878px">@gmail.com</span></div>
<div class="td" style="left:728px;top:712px"><span style="letter-spacing:0.064px">Mahsun AKAY</span></div>
<div class="td" style="left:907px;top:700px"><span style="letter-spacing:0.368px">Gerçek</span><br><span style="letter-spacing:-0.348px">Kişi</span></div>
<div class="td" style="left:1015px;top:712px"><span style="letter-spacing:-0.456px">01.06.2022</span></div>
<div class="td" style="left:1142px;top:712px"><span style="letter-spacing:-0.456px">01.05.2023</span></div>
<div class="td" style="left:1268px;top:712px"><span style="letter-spacing:-0.456px">04.13.2022</span></div>
<div class="td" style="left:1414px;top:712px"><span style="letter-spacing:-0.705px">1000</span></div>
<div class="td" style="left:1560px;top:688px"><span style="letter-spacing:0.402px">Kira Ödemesi</span><br><span style="letter-spacing:-0.291px">(13.04.2022 -</span><br><span style="letter-spacing:-0.014px">13.05.2022 arası)</span></div>
<div class="td" style="left:205px;top:819px"><span style="letter-spacing:-1.320px">a1921</span></div>
<div class="td" style="left:350px;top:819px"><span style="letter-spacing:0.912px">valid denem</span></div>
<div class="td" style="left:544px;top:807px"><span style="letter-spacing:1.021px">akaymahsun.ma</span><br><span style="letter-spacing:0.878px">@gmail.com</span></div>
<div class="td" style="left:728px;top:819px"><span style="letter-spacing:0.064px">Mahsun AKAY</span></div>
<div class="td" style="left:907px;top:807px"><span style="letter-spacing:0.368px">Gerçek</span><br><span style="letter-spacing:-0.348px">Kişi</span></div>
<div class="td" style="left:1015px;top:819px"><span style="letter-spacing:-0.456px">01.06.2022</span></div>
<div class="td" style="left:1142px;top:819px"><span style="letter-spacing:-0.456px">09.12.2023</span></div>
<div class="td" style="left:1268px;top:819px"><span style="letter-spacing:-0.456px">04.13.2022</span></div>
<div class="td" style="left:1414px;top:819px"><span style="letter-spacing:-1.283px">140</span></div>
<div class="td" style="left:1560px;top:795px"><span style="letter-spacing:0.402px">Kira Ödemesi</span><br><span style="letter-spacing:-0.291px">(13.04.2022 -</span><br><span style="letter-spacing:-0.014px">13.05.2022 arası)</span></div>
<div class="abs" style="left:1554px;top:799px;font-size:24px;line-height:28px;letter-spacing:0.39px;color:rgba(140,140,140,.55);white-space:nowrap">Activate Windows</div>
<div class="abs" style="left:1554px;top:831px;font-size:17px;line-height:20px;letter-spacing:0.47px;color:rgba(140,140,140,.55);white-space:nowrap">Go to Settings to activate Windows.</div>
</div>
<div id="sb"></div><div id="sbthumb"></div>
<div id="taskbar">
 <!-- windows logo -->
 <svg class="tb" style="left:20px;top:15px" width="21" height="21"><path d="M0 3 L8.5 1.8 V9.7 H0Z M9.5 1.6 L20.5 0 V9.7 H9.5Z M0 10.7 H8.5 V18.6 L0 17.4Z M9.5 10.7 H20.5 V20.5 L9.5 18.9Z" fill="#fff"/></svg>
 <!-- search -->
 <svg class="tb" style="left:80px;top:15px" width="21" height="21"><circle cx="12.5" cy="8" r="6.5" fill="none" stroke="#fff" stroke-width="1.4"/><path d="M8 12.5 L1 19.5" stroke="#fff" stroke-width="1.5"/></svg>
 <!-- cortana -->
 <svg class="tb" style="left:140px;top:15px" width="21" height="21"><circle cx="10.5" cy="10.5" r="8.3" fill="none" stroke="#fff" stroke-width="2.4"/></svg>
 <!-- store -->
 <svg class="tb" style="left:192px;top:11px" width="30" height="30"><path d="M9 6 V3 Q9 1 11 1 H19 Q21 1 21 3 V6" fill="none" stroke="#29a8e0" stroke-width="1.8"/><rect x="1" y="6" width="28" height="23" rx="3.5" fill="#f3f3f3"/><rect x="9" y="11.5" width="5.5" height="5.5" fill="#f25022"/><rect x="15.5" y="11.5" width="5.5" height="5.5" fill="#7fba00"/><rect x="9" y="18" width="5.5" height="5.5" fill="#00a4ef"/><rect x="15.5" y="18" width="5.5" height="5.5" fill="#ffb900"/></svg>
 <!-- mail -->
 <svg class="tb" style="left:242px;top:11px" width="31" height="29"><path d="M0.5 10 L15.5 1 L30.5 10 V28 H0.5Z" fill="#0f78d4"/><path d="M4 10 L15.5 3 L27 10 L15.5 18Z" fill="#fff"/><path d="M0.5 10 L15.5 19 L30.5 10 V28 H0.5Z" fill="#35a4f4"/><path d="M0.5 28 L15.5 17 L30.5 28Z" fill="#1a8ee8"/></svg>
 <!-- calculator -->
 <svg class="tb" style="left:296px;top:10px" width="24" height="30"><rect x="0.5" y="0.5" width="23" height="29" rx="2" fill="#5b6670"/><rect x="3" y="3" width="18" height="5" fill="#4fc3f7"/><g fill="#d7dde2"><rect x="3" y="10" width="4.5" height="4"/><rect x="9.5" y="10" width="4.5" height="4"/><rect x="16" y="10" width="5" height="4"/><rect x="3" y="16" width="4.5" height="4"/><rect x="9.5" y="16" width="4.5" height="4"/><rect x="3" y="22" width="4.5" height="4"/><rect x="9.5" y="22" width="4.5" height="4"/></g><rect x="16" y="16" width="5" height="10" fill="#0f5ca8"/></svg>
 <!-- explorer -->
 <svg class="tb" style="left:344px;top:11px" width="28" height="29"><path d="M0.5 3 Q0.5 1 2.5 1 H10 L12 4 H26 Q27.5 4 27.5 6 V26 Q27.5 28 25.5 28 H2.5 Q0.5 28 0.5 26Z" fill="#e8a92f"/><path d="M0.5 8 H27.5 V26 Q27.5 28 25.5 28 H2.5 Q0.5 28 0.5 26Z" fill="#ffd25c"/><path d="M7 28 V19 Q7 17 9 17 H19 Q21 17 21 19 V28 H17 V21 H11 V28Z" fill="#3b8bdf"/></svg>
 <div class="tb" style="left:339px;top:47px;width:39px;height:3px;background:#76b9ed"></div>
 <!-- this pc -->
 <svg class="tb" style="left:393px;top:12px" width="30" height="28"><path d="M9 1 L29 5 V19 L9 15Z" fill="#3fa3e8"/><path d="M10 2.5 L27.5 6 V17.5 L10 14Z" fill="#7dd0ff"/><path d="M1 22 L13 19 L20 23 L8 26Z" fill="#d9dde0"/><path d="M18 20 L24 18 L28 20 L22 22Z" fill="#c7cbce"/></svg>
 <!-- paint 3d -->
 <svg class="tb" style="left:446px;top:10px" width="24" height="31"><defs><linearGradient id="p3" x1="0" y1="0" x2="1" y2="1"><stop offset="0" stop-color="#ffb34d"/><stop offset=".35" stop-color="#ff4fa0"/><stop offset=".7" stop-color="#8a5cff"/><stop offset="1" stop-color="#2f8fff"/></linearGradient></defs><path d="M12 0.5 Q23.5 13 23.5 20 A11.5 11 0 0 1 0.5 20 Q0.5 13 12 0.5Z" fill="url(#p3)"/></svg>
 <!-- edge -->
 <svg class="tb" style="left:492px;top:11px" width="31" height="30"><defs><linearGradient id="ed" x1="0" y1="0" x2="1" y2="1"><stop offset="0" stop-color="#5fd35a"/><stop offset=".45" stop-color="#21a4db"/><stop offset="1" stop-color="#0c59a4"/></linearGradient></defs><circle cx="15.5" cy="15" r="14.5" fill="url(#ed)"/><path d="M8 16 Q9 8 17 8 Q24 8 24 14 H12 Q12 21 20 22 Q24 22 27 20 Q23 29 14 28 Q7 26 8 16Z" fill="#1b1f20" opacity=".9"/><path d="M12 14 H24 Q24 8 17 8 Q10 9 12 14Z" fill="#43c0e6"/></svg>
 <!-- outlook -->
 <svg class="tb" style="left:542px;top:11px" width="31" height="29"><rect x="10" y="1" width="20" height="27" rx="1" fill="#1490df"/><rect x="20" y="1" width="10" height="9" fill="#28a8ea"/><rect x="10" y="10" width="10" height="9" fill="#0f78d4"/><path d="M10 18 L30 13 V28 H10Z" fill="#50d9ff" opacity=".6"/><rect x="0.5" y="7" width="16" height="16" rx="1.5" fill="#0a64ad"/><circle cx="8.5" cy="15" r="4.5" fill="none" stroke="#fff" stroke-width="2"/></svg>
 <!-- opera -->
 <svg class="tb" style="left:594px;top:11px" width="29" height="29"><ellipse cx="14.5" cy="14.5" rx="14" ry="14" fill="#e0141e"/><ellipse cx="14.5" cy="14.5" rx="5.5" ry="10.5" fill="#1b1f20"/></svg>
 <!-- firefox -->
 <svg class="tb" style="left:644px;top:10px" width="29" height="31"><defs><linearGradient id="ff" x1="0" y1="0" x2="0" y2="1"><stop offset="0" stop-color="#ffbd2e"/><stop offset=".5" stop-color="#ff7139"/><stop offset="1" stop-color="#e8234c"/></linearGradient></defs><circle cx="14.5" cy="17" r="13.5" fill="url(#ff)"/><circle cx="14" cy="17.5" r="7.5" fill="#7542e5"/><path d="M20 1 Q27 8 27 15 L20 10Z" fill="#ffbd2e"/><path d="M5 10 Q9 6 14 8 Q9 9 8 12Z" fill="#ff9640"/></svg>
 <!-- chrome (active) -->
 <div class="tb" style="left:684px;top:0;width:44px;height:50px;background:#474a4b"></div>
 <div class="tb" style="left:729px;top:0;width:3px;height:50px;background:#2e3234"></div>
 <svg class="tb" style="left:692px;top:11px" width="28" height="28"><path d="M14 14 L2.31 7.25 A13.5 13.5 0 0 1 25.69 7.25 Z" fill="#db4437"/><path d="M14 14 L25.69 7.25 A13.5 13.5 0 0 1 14 27.5 Z" fill="#fcc934"/><path d="M14 14 L14 27.5 A13.5 13.5 0 0 1 2.31 7.25 Z" fill="#1e9e55"/><circle cx="14" cy="14" r="6.5" fill="#fff"/><circle cx="14" cy="14" r="5.2" fill="#3b82f0"/></svg>
 <div class="tb" style="left:684px;top:47px;width:44px;height:3px;background:#76b9ed"></div>
 <div class="tb" style="left:729px;top:47px;width:3px;height:3px;background:#5a8fb8"></div>
 <!-- discord -->
 <svg class="tb" style="left:742px;top:10px" width="31" height="31"><circle cx="15.5" cy="15.5" r="15" fill="#5865f2"/><path d="M9 10 Q12 8.5 13.5 9 L14 10 H17 L17.5 9 Q19 8.5 22 10 Q24.5 14.5 24 20 Q21.5 22 19.5 22 L18.5 20.5 Q20 20 21 19 Q15.5 21.5 10 19 Q11 20 12.5 20.5 L11.5 22 Q9.5 22 7 20 Q6.5 14.5 9 10Z" fill="#fff"/><ellipse cx="12.8" cy="15.8" rx="1.6" ry="1.8" fill="#5865f2"/><ellipse cx="18.2" cy="15.8" rx="1.6" ry="1.8" fill="#5865f2"/></svg>
 <!-- teams (orange highlight) -->
 <div class="tb" style="left:784px;top:0;width:49px;height:50px;background:#a25a26"></div>
 <div class="tb" style="left:784px;top:47px;width:49px;height:3px;background:#f7630c"></div>
 <svg class="tb" style="left:793px;top:10px" width="33" height="32"><circle cx="23" cy="5.5" r="3.5" fill="#7b83eb"/><path d="M15 9 H28 Q30 9 30 11 V20 Q30 26 23 26 Q16 26 15 20Z" fill="#7b83eb"/><circle cx="17" cy="5" r="4.5" fill="#5059c9"/><rect x="0" y="8" width="16" height="16" rx="1.5" fill="#4b53bc"/><path d="M4 12 H12 M8 12 V21" stroke="#fff" stroke-width="2.2"/><circle cx="24" cy="22.5" r="8" fill="#c4314b"/><text x="20.5" y="27.5" font-family="Liberation Sans" font-size="13" font-weight="700" fill="#fff">1</text></svg>
 <!-- IDM -->
 <svg class="tb" style="left:842px;top:12px" width="31" height="28"><circle cx="19" cy="9" r="8.5" fill="#3b8be0"/><path d="M12 7 Q19 3 26 8 Q20 12 13 11Z" fill="#6fbf3a"/><path d="M1 20 Q5 10 16 12 L11 15 Q5 15 4 23Z" fill="#e8402a"/><path d="M2 22 Q6 13 16 15 L12 18 Q7 18 5 25Z" fill="#f2c230"/><path d="M3 23 Q7 16 16 17 L13 20 Q8 20 7 26Z" fill="#27a8e0"/><path d="M12 13 L29 19 L20 21 L17 28Z" fill="#18a330"/></svg>
 <!-- vscode -->
 <svg class="tb" style="left:892px;top:10px" width="32" height="31"><path d="M23 1 L31 5 V26 L23 30 L8 17 L3 21 L1 19.5 V11.5 L3 10 L8 14Z" fill="#1f9cf0"/><path d="M23 7 L12 15.5 L23 24Z" fill="#1b1f20"/><path d="M23 1 L31 5 V26 L23 30Z" fill="#0065a9"/></svg>
 <!-- visual studio -->
 <svg class="tb" style="left:939px;top:10px" width="34" height="31"><path d="M24 1 L33 5 V26 L24 30 L9 17 L4 21 L1 19.5 V11.5 L4 10 L9 14Z" fill="#9b4fe0"/><path d="M24 8 L15 15.5 L24 23Z" fill="#1b1f20"/><path d="M24 1 L33 5 V26 L24 30Z" fill="#b47cf0"/></svg>
 <div class="tb" style="left:939px;top:47px;width:38px;height:3px;background:#76b9ed"></div>
 <!-- dbeaver -->
 <svg class="tb" style="left:992px;top:10px" width="31" height="31"><circle cx="15.5" cy="15.5" r="14.5" fill="#fff" stroke="#3fb2b2" stroke-width="2"/><path d="M6 27 Q5 14 13 9 Q20 6 24 11 Q27 15 23 19 L24 27Z" fill="#3b2a22"/><path d="M11 20 Q15 22 18 20 L17 26 H12Z" fill="#fff"/></svg>
 <!-- postgres -->
 <svg class="tb" style="left:1042px;top:10px" width="31" height="31"><path d="M4 4 Q10 0 16 3 Q23 0 28 4 Q31 10 27 17 Q25 22 23 24 Q22 30 18 29 Q16 28 16 24 Q12 26 10 23 Q5 18 3 12 Q2 7 4 4Z" fill="#336791" stroke="#fff" stroke-width="1.3"/><path d="M14 10 Q16 18 15 26" fill="none" stroke="#fff" stroke-width="1.2"/></svg>
 <!-- cmd -->
 <svg class="tb" style="left:1093px;top:13px" width="29" height="23"><rect x="0.5" y="0.5" width="28" height="21.5" fill="#000" stroke="#cfcfcf" stroke-width="1"/><rect x="1" y="1" width="27" height="2.5" fill="#cfcfcf"/><path d="M3 6 H6 M3 9 H5 M7 9 L10 12 M10 12 H15" stroke="#ddd" stroke-width="1"/></svg>
 <!-- powershell -->
 <svg class="tb" style="left:1145px;top:14px" width="27" height="22"><rect x="0.5" y="0.5" width="26" height="19.5" fill="#5a2a95" stroke="#c8b8e8" stroke-width="1"/><rect x="1" y="1" width="25" height="2.5" fill="#b8a8d8"/><path d="M3 7 H6 M8 7 L11 10 M12 11 H16" stroke="#fff" stroke-width="1.2"/></svg>
 <div class="tb" style="left:1139px;top:47px;width:39px;height:3px;background:#76b9ed"></div>
 <!-- notepad -->
 <svg class="tb" style="left:1192px;top:9px" width="29" height="29"><path d="M6 3 L27 6 L23 28 L2 25Z" fill="#bfe3ee"/><path d="M6 3 L27 6 L26 9 L5 6Z" fill="#4aa8c8"/><path d="M25 7 L28 7 L24 28 L22 28Z" fill="#e8b830"/><path d="M4 8 L24 11 L21 27 L2 24Z" fill="#dff2f8"/></svg>
 <div class="tb" style="left:1189px;top:47px;width:39px;height:3px;background:#76b9ed"></div>
 <div class="tb" style="left:1218px;top:47px;width:10px;height:3px;background:#4f86b2"></div>
 <!-- dbeaver 2 -->
 <svg class="tb" style="left:1242px;top:10px" width="31" height="31"><circle cx="15.5" cy="15.5" r="14.5" fill="#fff" stroke="#3fb2b2" stroke-width="2"/><path d="M6 27 Q5 14 13 9 Q20 6 24 11 Q27 15 23 19 L24 27Z" fill="#3b2a22"/><path d="M11 20 Q15 22 18 20 L17 26 H12Z" fill="#fff"/></svg>
 <div class="tb" style="left:1239px;top:47px;width:39px;height:3px;background:#76b9ed"></div>
 <!-- windows x4 -->
 <svg class="tb" style="left:1294px;top:13px" width="28" height="23"><rect x="0.5" y="0.5" width="27" height="21.5" fill="#f0f0f0" stroke="#ccc"/><defs><linearGradient id="wg" x1="0" y1="0" x2="1" y2="1"><stop offset="0" stop-color="#2a7ab0"/><stop offset="1" stop-color="#6ab04c"/></linearGradient></defs><rect x="2.5" y="3.5" width="13" height="17" fill="url(#wg)"/><rect x="24" y="4" width="2" height="6" fill="#3cb043"/><path d="M17 6 H22 M17 9 H22 M17 12 H22 M17 15 H22" stroke="#bbb" stroke-width="1"/></svg>
 <div class="tb" style="left:1289px;top:47px;width:39px;height:3px;background:#76b9ed"></div>
 <svg class="tb" style="left:1344px;top:13px" width="28" height="23"><rect x="0.5" y="0.5" width="27" height="21.5" fill="#f0f0f0" stroke="#ccc"/><rect x="2.5" y="3.5" width="13" height="17" fill="url(#wg)"/><rect x="24" y="4" width="2" height="6" fill="#3cb043"/><path d="M17 6 H22 M17 9 H22 M17 12 H22 M17 15 H22" stroke="#bbb" stroke-width="1"/></svg>
 <div class="tb" style="left:1339px;top:47px;width:39px;height:3px;background:#76b9ed"></div>
 <svg class="tb" style="left:1394px;top:13px" width="28" height="23"><rect x="0.5" y="0.5" width="27" height="21.5" fill="#f0f0f0" stroke="#ccc"/><rect x="2.5" y="3.5" width="13" height="17" fill="url(#wg)"/><rect x="24" y="4" width="2" height="6" fill="#3cb043"/><path d="M17 6 H22 M17 9 H22 M17 12 H22 M17 15 H22" stroke="#bbb" stroke-width="1"/></svg>
 <div class="tb" style="left:1389px;top:47px;width:39px;height:3px;background:#76b9ed"></div>
 <svg class="tb" style="left:1443px;top:13px" width="28" height="23"><rect x="0.5" y="0.5" width="27" height="21.5" fill="#f0f0f0" stroke="#ccc"/><rect x="2.5" y="3.5" width="13" height="17" fill="url(#wg)"/><rect x="24" y="4" width="2" height="6" fill="#3cb043"/><path d="M17 6 H22 M17 9 H22 M17 12 H22 M17 15 H22" stroke="#bbb" stroke-width="1"/></svg>
 <div class="tb" style="left:1439px;top:47px;width:37px;height:3px;background:#76b9ed"></div>
 <!-- weather -->
 <svg class="tb" style="left:1516px;top:13px" width="24" height="24"><defs><linearGradient id="sun" x1="0" y1="0" x2="1" y2="1"><stop offset="0" stop-color="#ffe066"/><stop offset="1" stop-color="#ff9a1f"/></linearGradient></defs><circle cx="12" cy="12" r="11.5" fill="url(#sun)"/></svg>
 <div class="tb" style="left:1554px;top:18px;color:#fff;font-size:17.5px;line-height:18px;letter-spacing:-0.4px;white-space:nowrap">19°C</div>
 <!-- tray -->
 <svg class="tb" style="left:1611px;top:19px" width="18" height="10"><path d="M1 9 L9 1 L17 9" fill="none" stroke="#fff" stroke-width="1.3"/></svg>
 <svg class="tb" style="left:1640px;top:16px" width="21" height="18"><path d="M1 6 H4 L9 2 V16 L4 12 H1Z" fill="none" stroke="#fff" stroke-width="1.2"/><path d="M12 7 Q13.5 9 12 11" fill="none" stroke="#fff" stroke-width="1.1"/><path d="M15 4.5 Q18 9 15 13.5" fill="none" stroke="#aaa" stroke-width="1.1"/><path d="M18 2 Q22 9 18 16" fill="none" stroke="#777" stroke-width="1.1"/></svg>
 <svg class="tb" style="left:1669px;top:17px" width="22" height="16"><path d="M2 1 V4 M4.5 1 V4 M1 4 H5.5 V6.5 Q5.5 8 3.3 8 V11" fill="none" stroke="#fff" stroke-width="1.1"/><rect x="5.5" y="4.5" width="14" height="9" fill="none" stroke="#fff" stroke-width="1.2"/><rect x="7" y="6" width="11" height="6" fill="#e8e8e8"/><rect x="20" y="7" width="1.6" height="4" fill="#fff"/></svg>
 <svg class="tb" style="left:1702px;top:16px" width="18" height="18"><path d="M1 17 A16 16 0 0 1 17 1 M4.5 17 A12.5 12.5 0 0 1 17 4.5 M8 17 A9 9 0 0 1 17 8 M11.5 17 A5.5 5.5 0 0 1 17 11.5" fill="none" stroke="#ccc" stroke-width="1.1"/><circle cx="16" cy="16" r="1.5" fill="#fff"/></svg>
 <div class="tb" style="left:1734px;top:18px;color:#fff;font-size:15px;line-height:15px;white-space:nowrap;letter-spacing:-1.2px">TUR</div>
 <div class="tb" style="left:1786px;top:6px;color:#fff;font-size:15px;line-height:15px;white-space:nowrap;letter-spacing:-0.5px">4:03 PM</div>
 <div class="tb" style="left:1778px;top:29px;color:#fff;font-size:15px;line-height:15px;white-space:nowrap;letter-spacing:0.1px">4/25/2022</div>
 <svg class="tb" style="left:1868px;top:14px" width="22" height="22"><path d="M1 1 H21 V16 H14 L11 19 L8 16 H1Z" fill="none" stroke="#fff" stroke-width="1.3" stroke-linejoin="round"/></svg>
 <div class="tb" style="left:1914px;top:0;width:1px;height:50px;background:#555"></div>
</div>

</body></html>
